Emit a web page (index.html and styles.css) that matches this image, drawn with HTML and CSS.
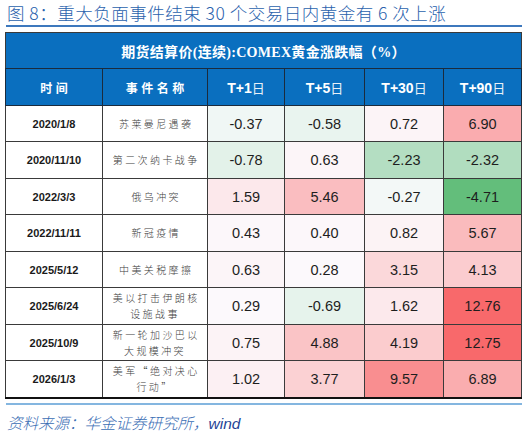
FILE: index.html
```html
<!DOCTYPE html>
<html lang="zh-CN">
<head>
<meta charset="utf-8">
<title>重大负面事件结束 30 个交易日内黄金有 6 次上涨</title>
<link rel="stylesheet" href="styles.css">
</head>
<body>
<div class="page">
  <div class="title">图 8：重大负面事件结束 30 个交易日内黄金有 6 次上涨</div>
  <table class="grid">
    <colgroup>
      <col class="c-date"><col class="c-name"><col class="c-t1"><col class="c-t5"><col class="c-t30"><col class="c-t90">
    </colgroup>
    <thead>
      <tr class="cap-row"><th colspan="6" class="cap">期货结算价(连续):COMEX黄金涨跌幅（%）</th></tr>
      <tr class="head-row">
        <th class="h-cn">时间</th>
        <th class="h-cn">事件名称</th>
        <th class="h-t">T+1<span class="ri">日</span></th>
        <th class="h-t">T+5<span class="ri">日</span></th>
        <th class="h-t">T+30<span class="ri">日</span></th>
        <th class="h-t">T+90<span class="ri">日</span></th>
      </tr>
    </thead>
    <tbody>
      <tr class="r-a">
        <td class="date">2020/1/8</td><td class="name">苏莱曼尼遇袭</td>
        <td class="num" style="background:rgb(240,247,245)">-0.37</td>
        <td class="num" style="background:rgb(233,244,239)">-0.58</td>
        <td class="num" style="background:rgb(252,244,247)">0.72</td>
        <td class="num" style="background:rgb(250,172,175)">6.90</td>
      </tr>
      <tr class="r-b">
        <td class="date">2020/11/10</td><td class="name">第二次纳卡战争</td>
        <td class="num" style="background:rgb(227,242,233)">-0.78</td>
        <td class="num" style="background:rgb(252,245,248)">0.63</td>
        <td class="num" style="background:rgb(180,222,194)">-2.23</td>
        <td class="num" style="background:rgb(177,221,191)">-2.32</td>
      </tr>
      <tr class="r-a">
        <td class="date">2022/3/3</td><td class="name">俄乌冲突</td>
        <td class="num" style="background:rgb(252,232,235)">1.59</td>
        <td class="num" style="background:rgb(250,189,192)">5.46</td>
        <td class="num" style="background:rgb(243,248,247)">-0.27</td>
        <td class="num" style="background:rgb(99,190,123)">-4.71</td>
      </tr>
      <tr class="r-b">
        <td class="date">2022/11/11</td><td class="name">新冠疫情</td>
        <td class="num" style="background:rgb(252,247,250)">0.43</td>
        <td class="num" style="background:rgb(252,247,250)">0.40</td>
        <td class="num" style="background:rgb(252,243,245)">0.82</td>
        <td class="num" style="background:rgb(250,187,189)">5.67</td>
      </tr>
      <tr class="r-a">
        <td class="date">2025/5/12</td><td class="name">中美关税摩擦</td>
        <td class="num" style="background:rgb(252,245,248)">0.63</td>
        <td class="num" style="background:rgb(252,249,252)">0.28</td>
        <td class="num" style="background:rgb(251,216,218)">3.15</td>
        <td class="num" style="background:rgb(251,204,207)">4.13</td>
      </tr>
      <tr class="r-b">
        <td class="date">2025/6/24</td><td class="name two">美以打击伊朗核<br>设施战事</td>
        <td class="num" style="background:rgb(252,249,252)">0.29</td>
        <td class="num" style="background:rgb(230,243,236)">-0.69</td>
        <td class="num" style="background:rgb(252,233,236)">1.62</td>
        <td class="num" style="background:rgb(248,105,107)">12.76</td>
      </tr>
      <tr class="r-a">
        <td class="date">2025/10/9</td><td class="name two">新一轮加沙巴以<br>大规模冲突</td>
        <td class="num" style="background:rgb(252,243,246)">0.75</td>
        <td class="num" style="background:rgb(250,196,198)">4.88</td>
        <td class="num" style="background:rgb(251,204,206)">4.19</td>
        <td class="num" style="background:rgb(248,105,107)">12.75</td>
      </tr>
      <tr class="r-b last">
        <td class="date">2026/1/3</td><td class="name two">美军“绝对决心<br>行动”</td>
        <td class="num" style="background:rgb(252,240,243)">1.02</td>
        <td class="num" style="background:rgb(251,209,211)">3.77</td>
        <td class="num" style="background:rgb(249,142,144)">9.57</td>
        <td class="num" style="background:rgb(250,173,175)">6.89</td>
      </tr>
    </tbody>
  </table>
  <div class="rule"></div>
  <div class="source">资料来源：华金证券研究所，<span class="wind">wind</span></div>
</div>
</body>
</html>
```
FILE: styles.css
```css
html, body {
  margin: 0;
  padding: 0;
  background: #ffffff;
}

.page {
  width: 527px;
  height: 432px;
  box-sizing: border-box;
  padding: 0 5px 0 5px;
  font-family: "Noto Sans CJK SC", "Liberation Sans", sans-serif;
}

.title {
  height: 25px;
  line-height: 26px;
  padding-left: 1px;
  margin-left: 1px;
  font-size: 17.5px;
  font-weight: 300;
  letter-spacing: 0.5px;
  color: #2a62ad;
  border-bottom: 2px solid #3d78bd;
  white-space: nowrap;
}

.grid {
  margin-top: 5px;
  width: 516px;
  border-collapse: collapse;
  table-layout: fixed;
  border: 1px solid #1e1e1e;
}

.c-date { width: 97px; }
.c-name { width: 105px; }
.c-t1 { width: 77px; }
.c-t5 { width: 80px; }
.c-t30 { width: 79px; }
.c-t90 { width: 78px; }

.grid th, .grid td {
  padding: 0;
  text-align: center;
  vertical-align: middle;
  border: 1px solid #3a3a3a;
}

.cap-row th {
  height: 35px;
  background: #0a6fbf;
  color: #ffffff;
  font-family: "Liberation Serif", "Noto Sans CJK SC", serif;
  font-size: 14px;
  font-weight: bold;
  letter-spacing: 0.3px;
  border-bottom: 1px solid #1b2b3d;
}

.head-row th {
  height: 36px;
  background: #0a6fbf;
  color: #ffffff;
  border-color: #1b2b3d;
}

.h-cn {
  font-size: 12px;
  font-weight: bold;
  letter-spacing: 3.5px;
  text-indent: 3.5px;
}

.h-t {
  font-family: "Liberation Sans", "Noto Sans CJK SC", sans-serif;
  font-size: 14px;
  font-weight: bold;
}

.h-t .ri {
  font-family: "Noto Sans CJK SC", sans-serif;
  font-weight: normal;
  font-size: 13px;
  color: #e8f0f8;
}

.r-a td { height: 35px; }
.r-b td { height: 36px; }

.date {
  font-family: "Liberation Sans", sans-serif;
  font-weight: bold;
  font-size: 11px;
  color: #1a1a1a;
  background: #ffffff;
}

.name {
  font-size: 10px;
  font-weight: 300;
  letter-spacing: 2.4px;
  text-indent: 2.4px;
  color: #404040;
  background: #ffffff;
  line-height: 16px;
}

.num {
  font-family: "Liberation Sans", sans-serif;
  font-size: 14.5px;
  color: #1e1e1e;
}

.last td {
  border-bottom: 2px solid #111111;
}

.rule {
  margin-top: 4px;
  margin-left: 1px;
  width: 516px;
  height: 2px;
  background: #84b6e0;
}

.source {
  margin-top: 7px;
  margin-left: 2px;
  font-size: 15.5px;
  font-weight: 300;
  line-height: 20px;
  font-style: italic;
  color: #3a6db4;
  white-space: nowrap;
}

.source .wind {
  font-family: "Liberation Sans", sans-serif;
  font-weight: normal;
  color: #1f4596;
}
```
